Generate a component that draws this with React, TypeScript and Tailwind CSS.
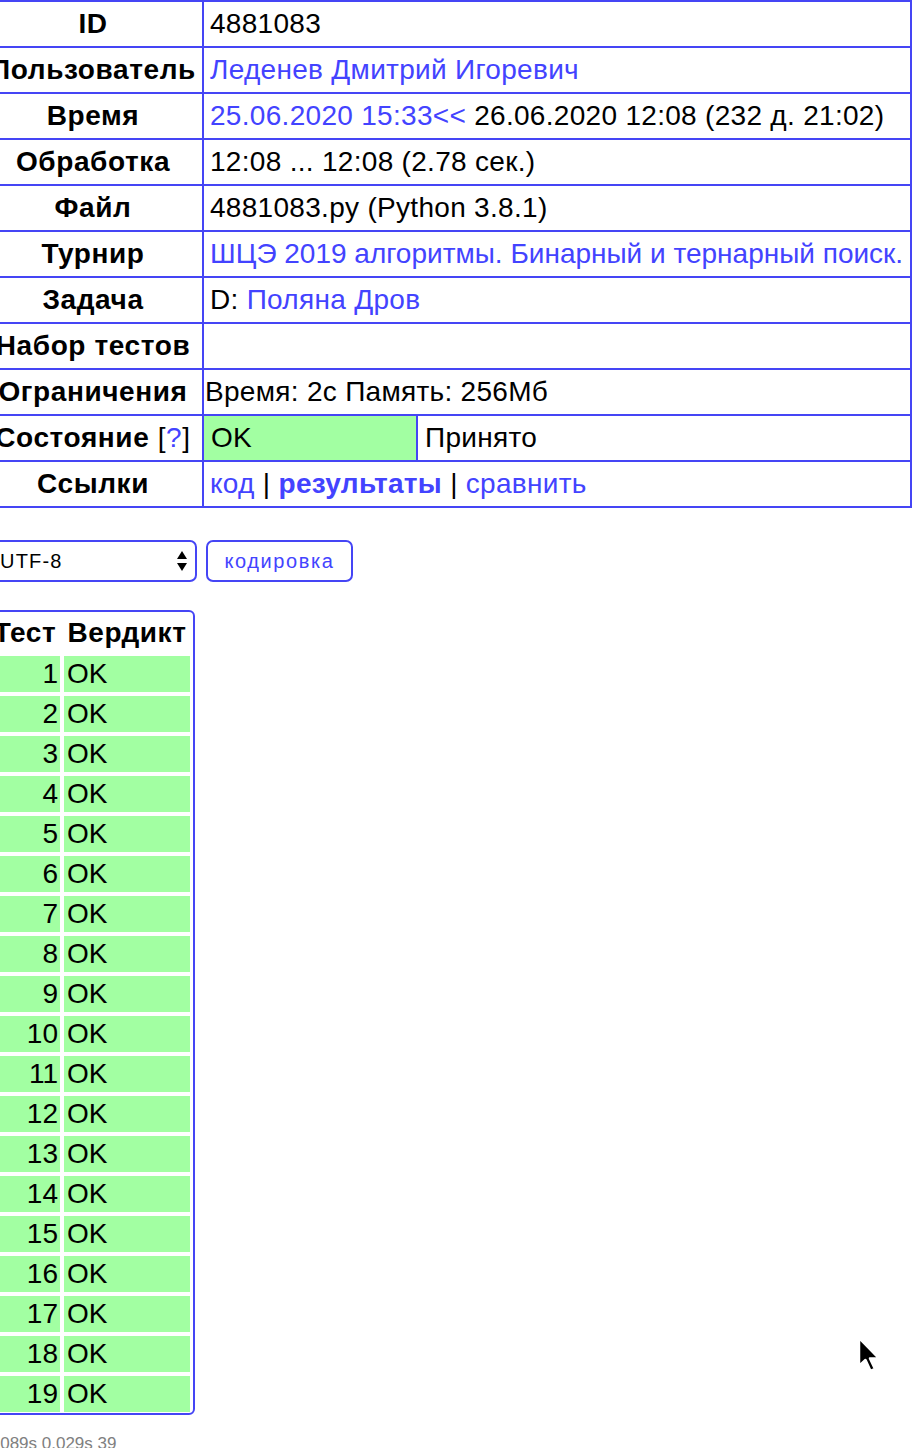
import React from "react"

const rows = Array.from({ length: 19 }, (_, i) => i + 1)

function Label({ children }: { children: React.ReactNode }) {
  return (
    <div className="border-r-2 border-b-2 border-[#4545f5] h-[46px] flex items-center justify-center font-bold whitespace-nowrap tracking-[0.6px]">
      {children}
    </div>
  )
}

function Value({ children, pad = "pl-[6px]" }: { children?: React.ReactNode; pad?: string }) {
  return (
    <div className={`border-r-2 border-b-2 border-[#4545f5] h-[46px] flex items-center whitespace-nowrap tracking-[0.3px] ${pad}`}>
      {children}
    </div>
  )
}

export default function App() {
  return (
    <div className="relative min-h-[1448px] overflow-hidden bg-white text-black font-['Liberation_Sans',Arial,sans-serif] text-[28px]">
      <div className="-ml-[18px]">

        {/* Submission info */}
        <div className="w-[930px] grid grid-cols-[220px_1fr] border-t-2 border-l-2 border-[#4545f5]">
          <Label>ID</Label>
          <Value>4881083</Value>

          <Label>Пользователь</Label>
          <Value><span className="text-[#4343ff]">Леденев Дмитрий Игоревич</span></Value>

          <Label>Время</Label>
          <Value>
            <span className="text-[#4343ff]">25.06.2020 15:33&lt;&lt;</span>
            <span className="whitespace-pre"> 26.06.2020 12:08 (232 д. 21:02)</span>
          </Value>

          <Label>Обработка</Label>
          <Value>12:08 ... 12:08 (2.78 сек.)</Value>

          <Label>Файл</Label>
          <Value>4881083.py (Python 3.8.1)</Value>

          <Label>Турнир</Label>
          <Value><span className="text-[#4343ff] tracking-[0px]">ШЦЭ 2019 алгоритмы. Бинарный и тернарный поиск.</span></Value>

          <Label>Задача</Label>
          <Value>
            <span className="whitespace-pre">D: </span>
            <span className="text-[#4343ff]">Поляна Дров</span>
          </Value>

          <Label>Набор тестов</Label>
          <Value />

          <Label>Ограничения</Label>
          <Value pad="pl-[1px]">Время: 2с Память: 256Мб</Value>

          <Label>
            Состояние<span className="font-normal whitespace-pre"> [<span className="text-[#4343ff]">?</span>]</span>
          </Label>
          <Value pad="pl-0">
            <div className="w-[214px] h-full bg-[#a2ffa2] border-r-2 border-[#4545f5] flex items-center pl-[7px]">
              OK
            </div>
            <div className="pl-[7px]">Принято</div>
          </Value>

          <Label>Ссылки</Label>
          <Value>
            <span className="text-[#4343ff]">код</span>
            <span className="whitespace-pre"> | </span>
            <span className="text-[#4343ff] font-bold">результаты</span>
            <span className="whitespace-pre"> | </span>
            <span className="text-[#4343ff]">сравнить</span>
          </Value>
        </div>

        {/* Encoding */}
        <div className="flex items-center gap-[9px] mt-[32px] ml-[8px]">
          <div className="w-[207px] h-[42px] border-2 border-[#4545f5] rounded-[7px] flex items-center justify-between pl-[8px] pr-[8px] text-[20px] tracking-[1.2px]">
            <span>UTF-8</span>
            <svg width="10" height="22" viewBox="0 0 10 22">
              <path d="M5 1 L10 9 L0 9 Z" fill="#000" />
              <path d="M5 21 L10 13 L0 13 Z" fill="#000" />
            </svg>
          </div>
          <div className="w-[147px] h-[42px] border-2 border-[#4545f5] rounded-[7px] flex items-center justify-center text-[20px] text-[#4343ff] tracking-[1.6px]">
            кодировка
          </div>
        </div>

        {/* Tests */}
        <div className="mt-[28px] ml-[4px] w-[209px] border-2 border-[#4545f5] rounded-[6px] pt-[2px] pb-[1px] pl-[2px]">
          <div className="grid grid-cols-[70px_126px] gap-x-[4px] gap-y-[4px]">
            <div className="h-[38px] flex items-center justify-center font-bold tracking-[0.6px]">Тест</div>
            <div className="h-[38px] flex items-center justify-center font-bold tracking-[0.6px]">Вердикт</div>
            {rows.map((n) => (
              <React.Fragment key={n}>
                <div className="h-[36px] bg-[#a2ffa2] flex items-center justify-end pr-[2px]">{n}</div>
                <div className="h-[36px] bg-[#a2ffa2] flex items-center pl-[3px]">OK</div>
              </React.Fragment>
            ))}
          </div>
        </div>

        <div className="mt-[16px] ml-[4px] text-[17px] text-[#808080] whitespace-pre">0.089s 0.029s 39</div>
      </div>

      {/* mouse pointer */}
      <svg className="absolute left-[854px] top-[1334px]" width="30" height="42" viewBox="0 0 30 42">
        <path d="M5 4 L5 32 L11.5 26 L16.5 37 L21 35 L16 24.5 L25 24.5 Z" fill="#000" stroke="#fff" strokeWidth="2.5" strokeLinejoin="round" />
      </svg>
    </div>
  )
}
